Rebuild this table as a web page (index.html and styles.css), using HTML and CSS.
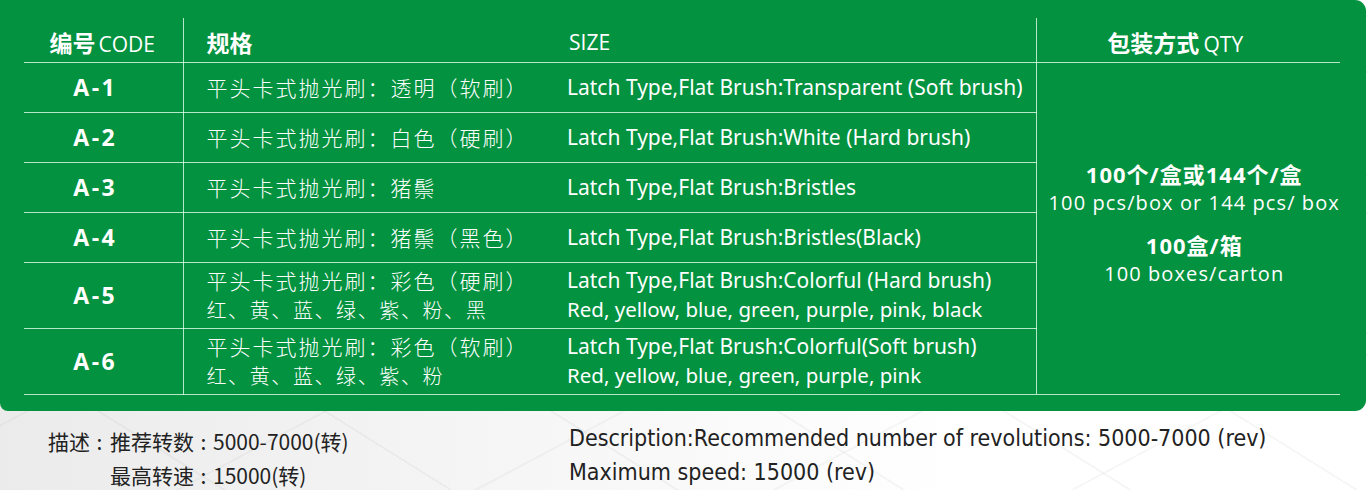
FILE: index.html
```html
<!DOCTYPE html>
<html lang="zh-CN">
<head>
<meta charset="utf-8">
<title>平头卡式抛光刷</title>
<link rel="stylesheet" href="styles.css">
</head>
<body>
<div class="panel">
  <table class="spec">
    <colgroup>
      <col class="c-code"><col class="c-cn"><col class="c-en"><col class="c-qty">
    </colgroup>
    <thead>
      <tr class="head">
        <th class="code"><b>编号</b><span class="lt">CODE</span></th>
        <th class="cn"><b>规格</b></th>
        <th class="en"><span class="lt">SIZE</span></th>
        <th class="qty"><b>包装方式</b> <span class="lt">QTY</span></th>
      </tr>
    </thead>
    <tbody>
      <tr class="r1">
        <td class="code">A-1</td>
        <td class="cn">平头卡式抛光刷：透明（软刷）</td>
        <td class="en">Latch Type,Flat Brush:Transparent (Soft brush)</td>
        <td class="qty" rowspan="6">
          <div class="q-cn">100个/盒或144个/盒</div>
          <div class="q-en">100 pcs/box or 144 pcs/ box</div>
          <div class="q-cn q-gap">100盒/箱</div>
          <div class="q-en">100 boxes/carton</div>
        </td>
      </tr>
      <tr class="r1">
        <td class="code">A-2</td>
        <td class="cn">平头卡式抛光刷：白色（硬刷）</td>
        <td class="en">Latch Type,Flat Brush:White (Hard brush)</td>
      </tr>
      <tr class="r1">
        <td class="code">A-3</td>
        <td class="cn">平头卡式抛光刷：猪鬃</td>
        <td class="en">Latch Type,Flat Brush:Bristles</td>
      </tr>
      <tr class="r1">
        <td class="code">A-4</td>
        <td class="cn">平头卡式抛光刷：猪鬃（黑色）</td>
        <td class="en">Latch Type,Flat Brush:Bristles(Black)</td>
      </tr>
      <tr class="r2">
        <td class="code">A-5</td>
        <td class="cn">平头卡式抛光刷：彩色（硬刷）<br><span class="sub">红、黄、蓝、绿、紫、粉、黑</span></td>
        <td class="en">Latch Type,Flat Brush:Colorful (Hard brush)<br><span class="sub">Red, yellow, blue, green, purple, pink, black</span></td>
      </tr>
      <tr class="r2">
        <td class="code">A-6</td>
        <td class="cn">平头卡式抛光刷：彩色（软刷）<br><span class="sub">红、黄、蓝、绿、紫、粉</span></td>
        <td class="en">Latch Type,Flat Brush:Colorful(Soft brush)<br><span class="sub">Red, yellow, blue, green, purple, pink</span></td>
      </tr>
    </tbody>
  </table>
</div>
<div class="desc">
  <div class="desc-cn">
    <span class="label">描述<span class="colon">:</span></span>
    <div class="lines">
      <div>推荐转数<span class="colon">:</span>5000-7000(转)</div>
      <div>最高转速<span class="colon">:</span>15000(转)</div>
    </div>
  </div>
  <div class="desc-en">
    <div>Description:Recommended number of revolutions: 5000-7000 (rev)</div>
    <div>Maximum speed: 15000 (rev)</div>
  </div>
</div>
</body>
</html>
```

FILE: styles.css
```css
html, body {
  margin: 0;
  padding: 0;
}
body {
  width: 1368px;
  height: 490px;
  overflow: hidden;
  font-family: "Open Sans", "Noto Sans CJK SC", sans-serif;
  background:
    repeating-linear-gradient(32deg, transparent 0 118px, rgba(0,0,0,0.035) 118px 120px),
    repeating-linear-gradient(-28deg, transparent 0 138px, rgba(0,0,0,0.03) 138px 140px),
    linear-gradient(90deg, #ebebeb 0%, #f5f5f5 35%, #ffffff 70%);
}
.panel {
  width: 1366px;
  height: 411px;
  box-sizing: border-box;
  background: #03923f;
  border-radius: 0 11px 11px 8px;
  padding: 18px 0 0 24px;
  color: #fff;
}
.spec {
  border-collapse: collapse;
  table-layout: fixed;
  width: 1316px;
}
.c-code { width: 159px; }
.c-cn { width: 384px; }
.c-en { width: 469px; }
.c-qty { width: 304px; }

.spec th, .spec td {
  padding: 0;
  border-bottom: 1px solid rgba(235,255,240,0.78);
  vertical-align: middle;
  font-weight: normal;
  white-space: nowrap;
}
.spec .code { border-right: 1px solid rgba(235,255,240,0.78); text-align: center; }
.spec .en { border-right: 1px solid rgba(235,255,240,0.78); }
.head th { height: 44px; padding-top: 4px; box-sizing: border-box; }
.head th b { font-family: "Noto Sans CJK SC", sans-serif; font-weight: 700; font-size: 23px; }
.head .lt { font-size: 21px; }
.head .code .lt { margin-left: 3px; }
.head .code { padding-right: 2px; }
.head .cn { text-align: left; padding-left: 23px; }
.head .en { text-align: left; padding-left: 2px; }
.head .qty { text-align: center; padding-right: 26px; }

.spec td.code {
  font-weight: 700;
  font-size: 23px;
  letter-spacing: 2.5px;
  padding-right: 16px;
}
.spec td.cn {
  padding-left: 23px;
  font-family: "Noto Sans CJK SC", sans-serif;
  font-size: 21px;
  letter-spacing: 2px;
  line-height: 29px;
  font-weight: 300;
}
.spec td.cn .sub { font-size: 20px; letter-spacing: 1.6px; }
.spec td.en {
  font-family: "Noto Sans", "Open Sans", sans-serif;
  font-size: 21px;
  line-height: 29px;
  letter-spacing: 0;
}
.spec td.en .sub { font-size: 20.5px; letter-spacing: 0; }
.r1 td { height: 49px; }
.r2 td { height: 64px; padding-bottom: 1px; }

.spec td.qty {
  text-align: center;
  vertical-align: top;
  padding-top: 96px;
  padding-left: 12px;
}
.q-cn {
  font-family: "Noto Sans", "Noto Sans CJK SC", sans-serif;
  font-weight: 700;
  font-size: 22px;
  letter-spacing: 1px;
  line-height: 30px;
}
.q-en { font-size: 20px; letter-spacing: 1.1px; line-height: 28px; }
.q-gap { margin-top: 13px; }

.desc {
  display: flex;
  padding: 13px 0 0 48px;
  color: #222;
  font-size: 21px;
  line-height: 34px;
}
.desc-cn {
  display: flex;
  width: 521px;
  font-family: "Noto Sans CJK SC", sans-serif;
  font-weight: 400;
  white-space: nowrap;
}
.desc-cn .label { width: 62px; flex: none; }
.colon { display: inline-block; width: 19px; text-align: center; }
.lines div { white-space: nowrap; }
.desc-en {
  font-family: "Liberation Sans Narrow", "DejaVu Sans Condensed", "Noto Sans", sans-serif;
  font-stretch: condensed;
  font-size: 23px;
  margin-top: -3px;
  white-space: nowrap;
}
```
